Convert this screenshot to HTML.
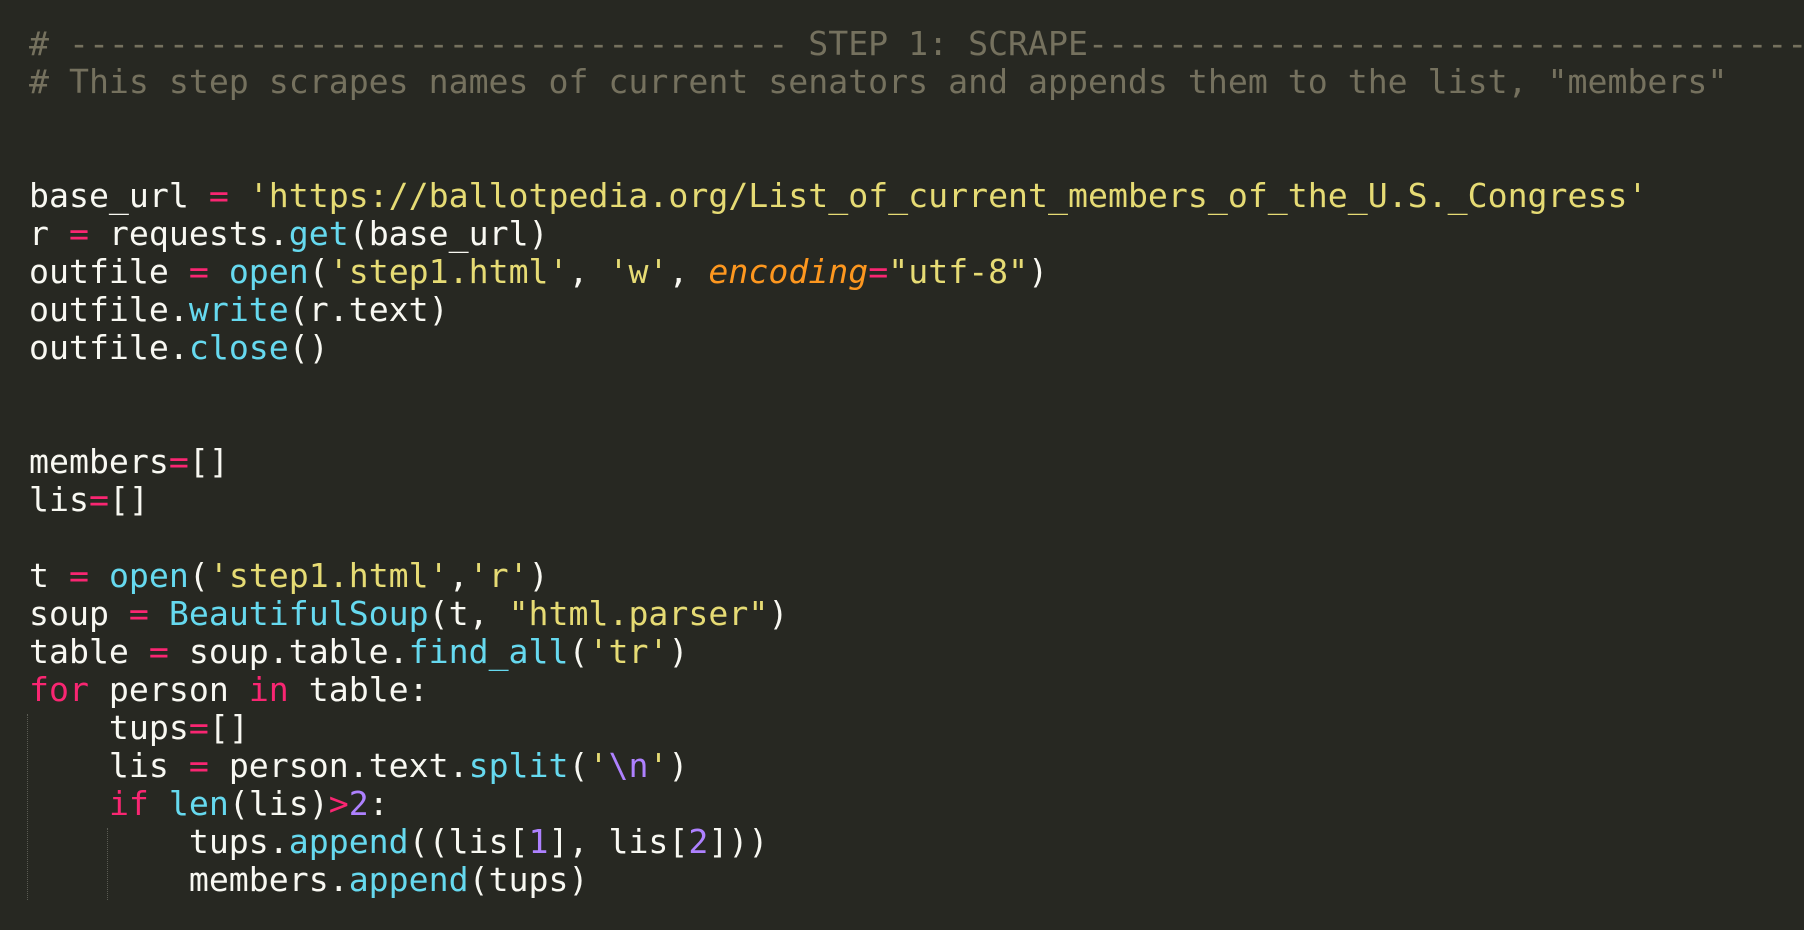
<!DOCTYPE html>
<html><head><meta charset="utf-8"><style>
html,body{margin:0;padding:0;background:#272822;width:1804px;height:930px;overflow:hidden}
#w{position:absolute;left:0;top:0;width:1804px;height:930px;overflow:hidden}
pre{position:absolute;left:29px;top:24.5px;margin:0;font-family:"DejaVu Sans Mono","Liberation Mono",monospace;font-size:33.2px;line-height:38px;color:#f8f8f2;white-space:pre}
.c{color:#75715e}.k{color:#f92672}.s{color:#e6db74}.f{color:#66d9ef}.o{color:#fd971f;font-style:italic}.n{color:#ae81ff}
.g{position:absolute;width:0;border-left:1px dotted #5a5b53}
</style></head><body><div id="w">
<div class="g" style="left:27px;top:714px;height:186px"></div>
<div class="g" style="left:107px;top:828px;height:72px"></div>
<pre><span class="c"># ------------------------------------ STEP 1: SCRAPE------------------------------------</span>
<span class="c"># This step scrapes names of current senators and appends them to the list, "members"</span>


base_url <span class="k">=</span> <span class="s">'https://ballotpedia.org/List_of_current_members_of_the_U.S._Congress'</span>
r <span class="k">=</span> requests.<span class="f">get</span>(base_url)
outfile <span class="k">=</span> <span class="f">open</span>(<span class="s">'step1.html'</span>, <span class="s">'w'</span>, <span class="o">encoding</span><span class="k">=</span><span class="s">"utf-8"</span>)
outfile.<span class="f">write</span>(r.text)
outfile.<span class="f">close</span>()


members<span class="k">=</span>[]
lis<span class="k">=</span>[]

t <span class="k">=</span> <span class="f">open</span>(<span class="s">'step1.html'</span>,<span class="s">'r'</span>)
soup <span class="k">=</span> <span class="f">BeautifulSoup</span>(t, <span class="s">"html.parser"</span>)
table <span class="k">=</span> soup.table.<span class="f">find_all</span>(<span class="s">'tr'</span>)
<span class="k">for</span> person <span class="k">in</span> table:
    tups<span class="k">=</span>[]
    lis <span class="k">=</span> person.text.<span class="f">split</span>(<span class="s">'</span><span class="n">\n</span><span class="s">'</span>)
    <span class="k">if</span> <span class="f">len</span>(lis)<span class="k">&gt;</span><span class="n">2</span>:
        tups.<span class="f">append</span>((lis[<span class="n">1</span>], lis[<span class="n">2</span>]))
        members.<span class="f">append</span>(tups)</pre>
</div></body></html>
